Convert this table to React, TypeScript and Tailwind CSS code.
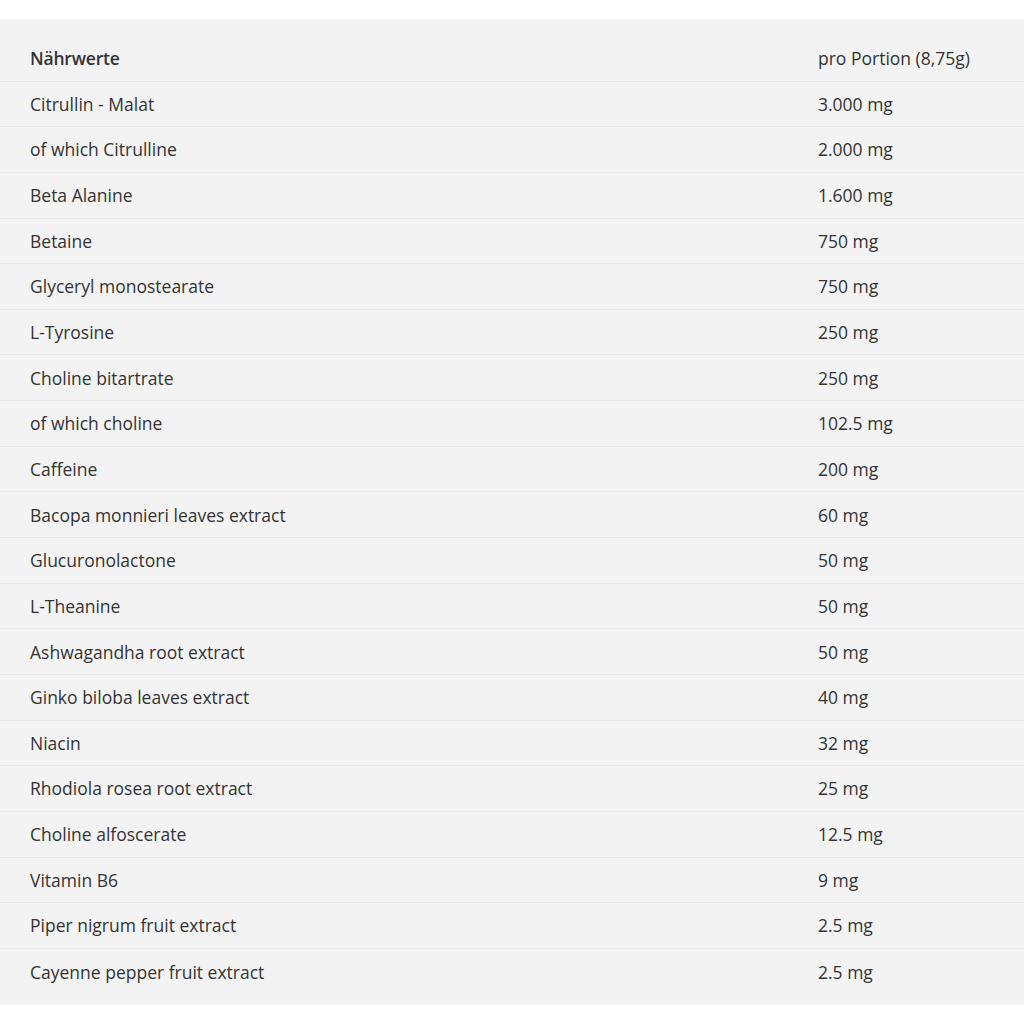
const rows = [
  { name: "Citrullin - Malat", amount: "3.000 mg" },
  { name: "of which Citrulline", amount: "2.000 mg" },
  { name: "Beta Alanine", amount: "1.600 mg" },
  { name: "Betaine", amount: "750 mg" },
  { name: "Glyceryl monostearate", amount: "750 mg" },
  { name: "L-Tyrosine", amount: "250 mg" },
  { name: "Choline bitartrate", amount: "250 mg" },
  { name: "of which choline", amount: "102.5 mg" },
  { name: "Caffeine", amount: "200 mg" },
  { name: "Bacopa monnieri leaves extract", amount: "60 mg" },
  { name: "Glucuronolactone", amount: "50 mg" },
  { name: "L-Theanine", amount: "50 mg" },
  { name: "Ashwagandha root extract", amount: "50 mg" },
  { name: "Ginko biloba leaves extract", amount: "40 mg" },
  { name: "Niacin", amount: "32 mg" },
  { name: "Rhodiola rosea root extract", amount: "25 mg" },
  { name: "Choline alfoscerate", amount: "12.5 mg" },
  { name: "Vitamin B6", amount: "9 mg" },
  { name: "Piper nigrum fruit extract", amount: "2.5 mg" },
  { name: "Cayenne pepper fruit extract", amount: "2.5 mg" },
];

export default function App() {
  return (
    <div className="min-h-[1024px] bg-white pt-[19px]" style={{ fontFamily: '"Open Sans", "Liberation Sans", sans-serif' }}>
      <div className="bg-[#f3f3f3] pt-[17px] pb-[11px] text-[#333333] text-[17.5px]">
        {/* Kopfzeile */}
        <div className="grid grid-cols-[818px_1fr] h-[45.65px] items-center border-b border-[#e8e8e8]">
          <span className="pl-[30px] font-semibold tracking-[-0.2px]">Nährwerte</span>
          <span className="font-medium">pro Portion (8,75g)</span>
        </div>

        {rows.map((row, i) => (
          <div
            key={row.name}
            className={`grid grid-cols-[818px_1fr] h-[45.65px] items-center ${i < rows.length - 1 ? "border-b border-[#e8e8e8]" : ""}`}
          >
            <span className="pl-[30px]">{row.name}</span>
            <span>{row.amount}</span>
          </div>
        ))}
      </div>
    </div>
  );
}
